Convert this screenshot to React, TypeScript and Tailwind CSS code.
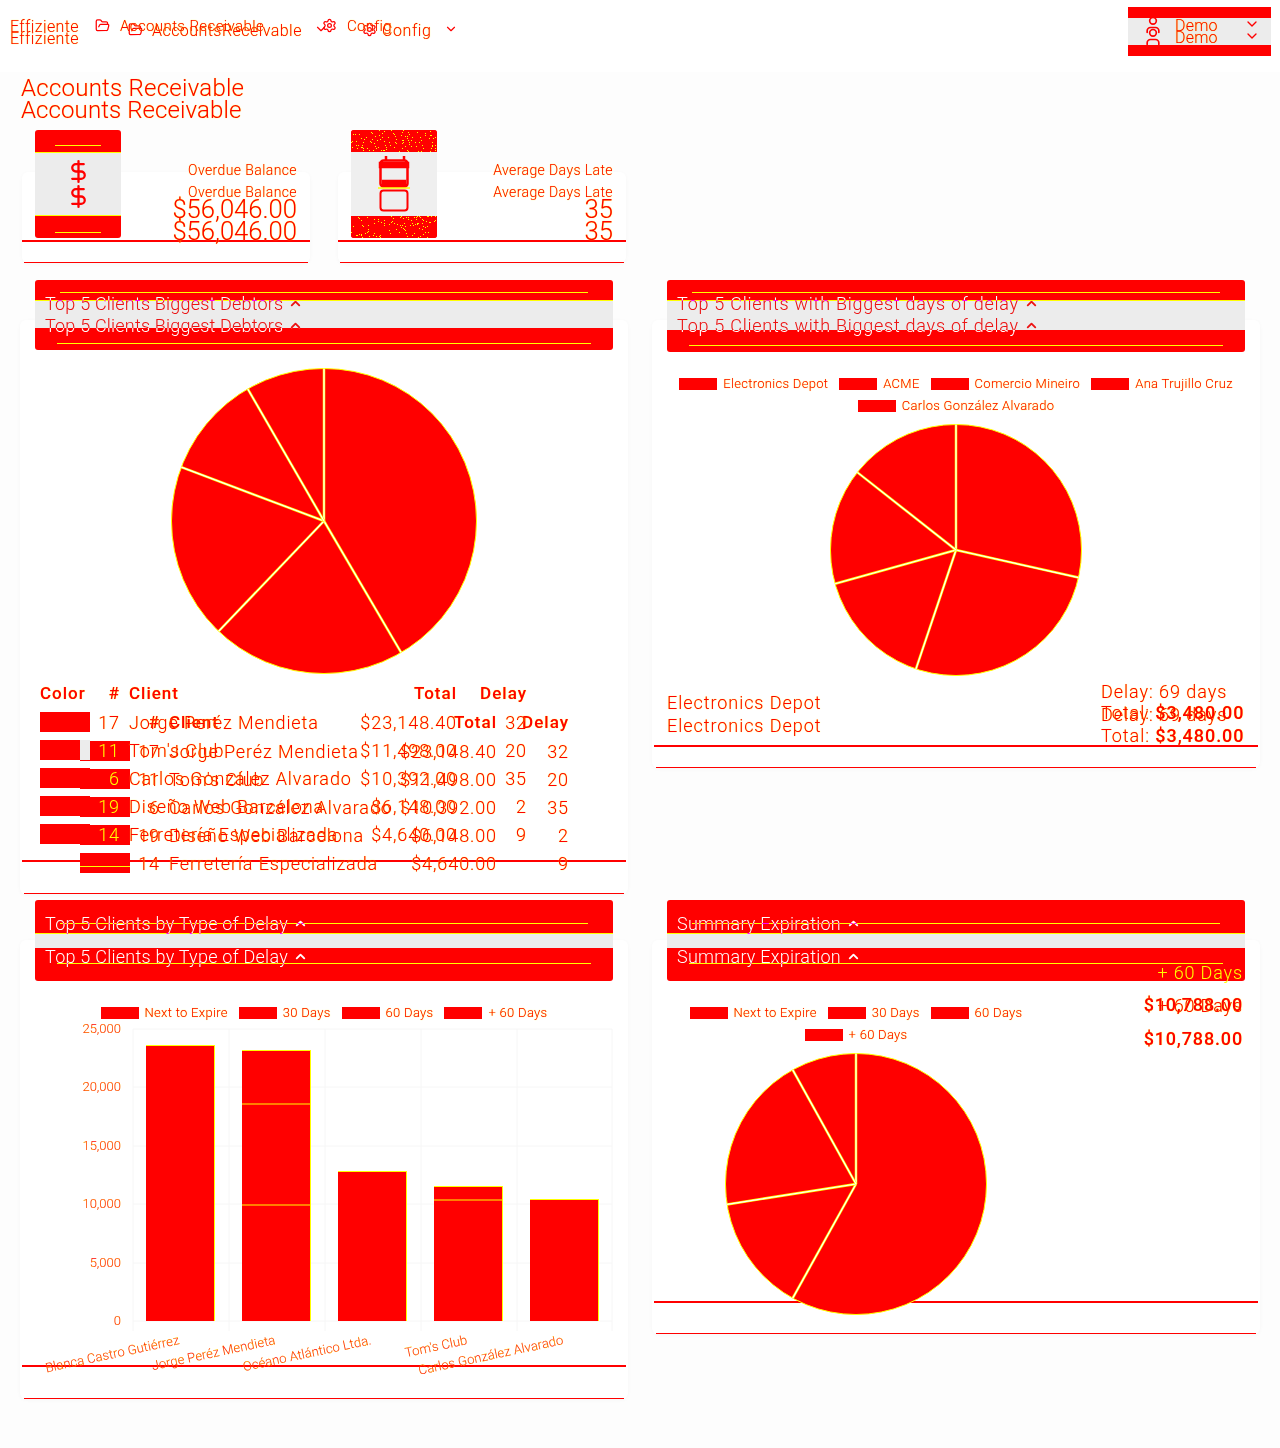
import { ChevronDown, ChevronUp, DollarSign, FolderOpen, Settings, User } from 'lucide-react';

const red = '#ff0000';
const redText = "text-[#ff0000] [text-shadow:0_0_1px_#ffff00]";

const rows = [
  { id: 17, client: 'Jorge Peréz Mendieta', total: '$23,148.40', delay: 32 },
  { id: 11, client: "Tom's Club", total: '$11,498.00', delay: 20 },
  { id: 6, client: 'Carlos González Alvarado', total: '$10,392.00', delay: 35 },
  { id: 19, client: 'Diseño Web Barcelona', total: '$6,148.00', delay: 2 },
  { id: 14, client: 'Ferretería Especializada', total: '$4,640.00', delay: 9 },
];

const bars = [
  { name: 'Blanca Castro Gutiérrez', x: 146, top: 1046, lines: [] as number[] },
  { name: 'Jorge Peréz Mendieta', x: 242, top: 1051, lines: [1104, 1205] },
  { name: 'Océano Atlántico Ltda.', x: 338, top: 1172, lines: [] as number[] },
  { name: "Tom's Club", x: 434, top: 1187, lines: [1200] },
  { name: 'Carlos González Alvarado', x: 530, top: 1200, lines: [] as number[] },
];

const point = (c: number, r: number, deg: number) => {
  const a = (deg * Math.PI) / 180;
  return [c + r * Math.sin(a), c - r * Math.cos(a)];
};

const Pie = ({ size, angles, className }: { size: number; angles: number[]; className: string }) => {
  const c = size / 2;
  const r = c - 0.5;
  return (
    <svg width={size} height={size} className={className}>
      <circle cx={c} cy={c} r={r} fill={red} stroke="#ffff00" strokeWidth="1" />
      {angles.map((deg) => {
        const [x, y] = point(c, r, deg);
        return (
          <g key={deg}>
            <line x1={c} y1={c} x2={x} y2={y} stroke="#ffff00" strokeWidth="2.5" />
            <line x1={c} y1={c} x2={x} y2={y} stroke="#ffffff" strokeWidth="1.2" />
          </g>
        );
      })}
    </svg>
  );
};

const Speckle = ({ seed }: { seed: number }) => {
  let n = seed;
  const dots = Array.from({ length: 110 }, () => {
    n = (n * 1103515245 + 12345) % 2147483648;
    const x = (n >> 8) % 86;
    n = (n * 1103515245 + 12345) % 2147483648;
    return { x, y: (n >> 8) % 22 };
  });
  return (
    <svg width="86" height="22" className="block">
      <rect width="86" height="22" fill={red} />
      {dots.map((d, i) => (
        <rect key={i} x={d.x} y={d.y} width="1" height="1" fill="#ffff00" />
      ))}
    </svg>
  );
};

const Legend = ({ items, className }: { items: string[]; className: string }) => (
  <div className={`flex flex-wrap justify-center gap-x-[11px] ${className}`}>
    {items.map((item) => (
      <div key={item} className="flex h-[22px] items-center gap-[6px]">
        <span className="h-[12px] w-[38px] bg-[#ff0000]" />
        <span className={`text-[13px] font-light tracking-[0.3px] ${redText}`}>{item}</span>
      </div>
    ))}
  </div>
);

const Header = ({ top, mid, bottom, upper, lower }: { top: string; mid: string; bottom: string; upper: string; lower: string }) => (
  <div className="flex w-[578px] flex-col overflow-hidden rounded-[3px] bg-[#ff0000]">
    <div className={top}>
      <div className={`mx-[25px] h-px bg-[#ffff00] ${upper}`} />
    </div>
    <div className={`border-t border-[#ffff00] bg-[#ececec] ${mid}`} />
    <div className={bottom}>
      <div className={`mx-[22px] h-px bg-[#ffff00] ${lower}`} />
    </div>
  </div>
);

const Panel = ({ card, line, children }: { card: string; line: string; children: React.ReactNode }) => (
  <div className="grid w-[632px] items-start">
    <div className={`col-start-1 row-start-1 ml-[20px] mt-[40px] flex w-[608px] flex-col rounded-md bg-white px-[2px] shadow-[0_1px_4px_rgba(0,0,0,0.03)] ${card}`}>
      <div className={`h-[2px] bg-[#ff0000] ${line}`} />
      <div className="mx-[2px] mt-auto h-px bg-[#ff0000]" />
    </div>
    <div className="col-start-1 row-start-1 ml-[35px]">{children}</div>
  </div>
);

const KpiBox = ({ kind }: { kind: 'money' | 'date' }) => (
  <div className="col-start-1 row-start-1 ml-[35px] flex h-[108px] w-[86px] flex-col overflow-hidden rounded-[3px] bg-[#ff0000]">
    {kind === 'money' ? (
      <div className="h-[22px]">
        <div className="mx-[20px] mt-[15px] h-px bg-[#ffff00]" />
      </div>
    ) : (
      <Speckle seed={7} />
    )}
    {kind === 'money' ? (
      <div className="flex h-[64px] flex-col items-center justify-center border-y border-[#ffff00] bg-[#ececec] text-[#ff0000]">
        <DollarSign size={25} strokeWidth={2.2} />
        <DollarSign size={25} strokeWidth={2.2} />
      </div>
    ) : (
      <div className="flex h-[64px] items-center justify-center bg-[#efefef]">
        <svg width="32" height="56" viewBox="0 0 32 56" fill="none" stroke={red} strokeWidth="2.5">
          <path d="M8 0v5M26 0v5" />
          <rect x="2.5" y="4.5" width="27" height="26" rx="3" />
          <path d="M2 7h28v4H2zM5 25h22v5H5z" fill={red} />
          <path d="M0 32h32" stroke="#ffff00" strokeWidth="1.5" />
          <rect x="2.5" y="34.5" width="27" height="20" rx="3" strokeWidth="2" />
        </svg>
      </div>
    )}
    {kind === 'money' ? (
      <div className="h-[22px]">
        <div className="mx-[20px] mt-[16px] h-px bg-[#ffff00]" />
      </div>
    ) : (
      <Speckle seed={91} />
    )}
  </div>
);

const KpiCard = ({ kind }: { kind: 'money' | 'date' }) => (
  <div className="grid h-[133px] w-[316px]">
    <div className="col-start-1 row-start-1 ml-[22px] mt-[42px] flex h-[91px] w-[288px] flex-col rounded-md bg-white shadow-[0_1px_4px_rgba(0,0,0,0.03)]">
      <div className="mt-[68px] h-[2px] bg-[#ff0000]" />
      <div className="mx-[2px] mt-auto h-px bg-[#ff0000]" />
    </div>
    <KpiBox kind={kind} />
  </div>
);

const Chart = () => (
  <svg width="578" height="380" viewBox="35 1020 578 380" className="-mt-[4px] block">
    {[1029, 1087, 1146, 1204, 1263, 1321].map((y, i) => (
      <g key={y}>
        <line x1="133" x2="612" y1={y} y2={y} stroke="#f6f6f6" />
        <text x="121" y={y + 4} textAnchor="end" fontSize="13" fontWeight="300" fill={red} stroke="#ffff00" strokeWidth="0.1">
          {['25,000', '20,000', '15,000', '10,000', '5,000', '0'][i]}
        </text>
      </g>
    ))}
    {[133, 229, 325, 421, 517, 612].map((x) => (
      <line key={x} x1={x} x2={x} y1="1029" y2="1331" stroke="#f6f6f6" />
    ))}
    {bars.map((bar) => (
      <g key={bar.name}>
        <rect x={bar.x} y={bar.top} width="68" height={1321 - bar.top} fill={red} />
        <line x1={bar.x + 68.5} x2={bar.x + 68.5} y1={bar.top} y2="1321" stroke="#ffff00" />
        <line x1={bar.x} x2={bar.x + 69} y1={bar.top - 0.5} y2={bar.top - 0.5} stroke="#ffff00" />
        {bar.lines.map((y) => (
          <line key={y} x1={bar.x} x2={bar.x + 69} y1={y} y2={y} stroke="#ffff00" />
        ))}
        <text
          x={bar.x + 34}
          y="1344"
          textAnchor="end"
          fontSize="13"
          fontWeight="300"
          letterSpacing="0.1"
          fill={red}
          stroke="#ffff00"
          strokeWidth="0.1"
          transform={`rotate(-12 ${bar.x + 34} 1344)`}
        >
          {bar.name}
        </text>
      </g>
    ))}
  </svg>
);

const Surface = () => (
  <div className="col-start-1 row-start-1 flex flex-col">
    <div className="flex h-[72px] justify-end bg-white pr-[9px] pt-[7px]">
      <div className="flex h-[49px] w-[143px] flex-col bg-[#ff0000]">
        <div className="mt-[11px] h-[27px] bg-[#ececec]" />
      </div>
    </div>
    <div className="mt-[58px] flex">
      <KpiCard kind="money" />
      <KpiCard kind="date" />
    </div>
    <div className="mt-[17px] flex h-[620px] items-start">
      <Panel card="h-[574px]" line="mt-[540px]">
        <Header top="h-[20px]" mid="h-[28px]" bottom="h-[22px]" upper="mt-[12px]" lower="mt-[15px]" />
        <Pie size={306} angles={[0, 149.6, 223.7, 290.7, 330]} className="ml-[136px] mt-[18px]" />
      </Panel>
      <Panel card="h-[448px]" line="mt-[425px]">
        <Header top="h-[20px]" mid="h-[30px]" bottom="h-[22px]" upper="mt-[12px]" lower="mt-[15px]" />
        <Legend
          items={['Electronics Depot', 'ACME', 'Comercio Mineiro', 'Ana Trujillo Cruz', 'Carlos González Alvarado']}
          className="mt-[21px] w-[578px]"
        />
        <Pie size={252} angles={[0, 102.7, 198.6, 254.4, 308.2]} className="ml-[163px] mt-[7px]" />
      </Panel>
    </div>
    <div className="flex items-start">
      <Panel card="h-[459px]" line="mt-[425px]">
        <Header top="h-[33px]" mid="h-[15px]" bottom="h-[33px]" upper="mt-[23px]" lower="mt-[15px]" />
        <Legend items={['Next to Expire', '30 Days', '60 Days', '+ 60 Days']} className="mt-[21px] w-[578px]" />
        <Chart />
      </Panel>
      <Panel card="h-[394px]" line="mt-[361px]">
        <Header top="h-[33px]" mid="h-[15px]" bottom="h-[33px]" upper="mt-[23px]" lower="mt-[15px]" />
        <Legend items={['Next to Expire', '30 Days', '60 Days', '+ 60 Days']} className="mt-[21px] w-[378px]" />
        <Pie size={262} angles={[0, 209, 261, 331]} className="ml-[58px] mt-[7px]" />
      </Panel>
    </div>
  </div>
);

const Heading = ({ text, className }: { text: string; className: string }) => (
  <div className={`ml-[45px] flex h-[24px] items-center gap-[5px] text-[18px] font-light text-[#00ffff] mix-blend-difference ${className}`}>
    {text}
    <ChevronUp size={15} strokeWidth={3} />
  </div>
);

const Table = ({ className, ghost }: { className: string; ghost: boolean }) => (
  <div className={`text-[18px] font-light tracking-[0.9px] ${className}`}>
    <div className={`flex h-[28px] items-center text-[17px] font-medium tracking-[1px] ${redText}`}>
      <span className="w-[50px]">{ghost ? '' : 'Color'}</span>
      <span className="w-[30px] text-right">#</span>
      <span className="w-[238px] pl-[9px]">Client</span>
      <span className="w-[99px] text-right">Total</span>
      <span className={`${ghost ? 'w-[72px]' : 'w-[70px]'} text-right`}>Delay</span>
    </div>
    {rows.map((row, i) => (
      <div key={row.id} className={`flex h-[28px] items-center ${redText}`}>
        <span className={`flex h-[20px] w-[50px] bg-[#ff0000] ${ghost ? '' : 'justify-end'}`}>
          {!ghost && i === 1 && <span className="h-[20px] w-[10px] bg-[#ececec]" />}
          {ghost && i === 4 && <span className="mt-[13px] h-px w-[50px] bg-[#ffff00]" />}
        </span>
        <span className={`w-[30px] text-right ${!ghost && i > 0 ? 'text-[#ffff00] [text-shadow:none]' : ''}`}>{row.id}</span>
        <span className="w-[238px] whitespace-nowrap pl-[9px]">{row.client}</span>
        <span className="w-[99px] whitespace-nowrap text-right">{row.total}</span>
        <span className={`${ghost ? 'w-[72px]' : 'w-[70px]'} text-right`}>{row.delay}</span>
      </div>
    ))}
  </div>
);

const Kpi = ({ label, value, className }: { label: string; value: string; className: string }) => (
  <div className={`flex w-[316px] flex-col items-end pr-[19px] font-light ${redText} ${className}`}>
    <div className="text-[14px] leading-[20px] tracking-[0.4px]">{label}</div>
    <div className="mt-[15px] text-[25.6px] leading-[28px]">{value}</div>
  </div>
);

const Account = ({ className }: { className: string }) => (
  <div className={`ml-auto mr-[20px] flex w-[115px] items-start ${className}`}>
    <User size={20} className="-ml-[2px] mr-[12px] -mt-[1px] shrink-0" />
    <span className="w-[70px] leading-[19px] tracking-[0.2px]">Demo</span>
    <ChevronDown size={16} className="shrink-0" />
  </div>
);

const Navigation = ({ ghost }: { ghost: boolean }) =>
  ghost ? (
    <div className={`flex h-[72px] items-start pt-[19px] text-[16px] font-light ${redText}`}>
      <span className="ml-[10px] mt-[8px] w-[118px] tracking-[0.4px]">Effiziente</span>
      <FolderOpen size={15} className="mr-[9px] mt-[3px] shrink-0" />
      <span className="w-[150px] tracking-[0.45px]">AccountsReceivable</span>
      <ChevronDown size={14} className="ml-[12px] mr-[34px] mt-[3px] shrink-0" />
      <Settings size={15} className="mr-[5px] mt-[3px] shrink-0" />
      <span className="w-[62px] tracking-[0.6px]">Config</span>
      <ChevronDown size={14} className="mt-[3px] shrink-0" />
      <Account className="mt-[9px]" />
    </div>
  ) : (
    <div className={`flex h-[72px] items-start pt-[15px] text-[16px] font-light ${redText}`}>
      <span className="ml-[10px] w-[85px] tracking-[0.4px]">Effiziente</span>
      <FolderOpen size={15} className="mr-[10px] mt-[3px] shrink-0" />
      <span className="w-[202px] text-[15px] tracking-[0.4px]">Accounts Receivable</span>
      <Settings size={15} className="mr-[10px] mt-[3px] shrink-0" />
      <span className="text-[15px] tracking-[0.3px]">Config</span>
      <Account className="mt-[1px]" />
    </div>
  );

const TextLayer = ({ ghost }: { ghost: boolean }) => (
  <div className="col-start-1 row-start-1 flex flex-col">
    <Navigation ghost={ghost} />
    <div className={`h-[58px] pl-[21px] text-[24px] font-light leading-[28px] ${redText} ${ghost ? 'pt-[24px] tracking-[0.1px]' : 'pt-[2px] tracking-[0.25px]'}`}>
      Accounts Receivable
    </div>
    <div className="flex h-[150px]">
      <Kpi label="Overdue Balance" value="$56,046.00" className={ghost ? 'pt-[52px]' : 'pt-[30px]'} />
      <Kpi label="Average Days Late" value="35" className={ghost ? 'pt-[52px]' : 'pt-[30px]'} />
    </div>
    <div className="flex h-[620px] items-start">
      <div className="w-[632px]">
        <Heading text="Top 5 Clients Biggest Debtors" className={`tracking-[0.2px] ${ghost ? 'mt-[33px]' : 'mt-[11px]'}`} />
        <Table ghost={ghost} className={ghost ? 'ml-[80px] mt-[372px]' : 'ml-[40px] mt-[365px]'} />
      </div>
      <div className="w-[632px]">
        <Heading text="Top 5 Clients with Biggest days of delay" className={`tracking-[0.75px] ${ghost ? 'mt-[33px]' : 'mt-[11px]'}`} />
        <div className={`ml-[35px] flex w-[578px] items-center justify-between font-light tracking-[0.95px] ${redText} text-[18px] leading-[21px] ${ghost ? 'mt-[367px]' : 'mt-[366px]'}`}>
          <span>Electronics Depot</span>
          <div className="w-[144px] whitespace-nowrap">
            <div>Delay: 69 days</div>
            <div>
              Total: <span className="font-medium">$3,480.00</span>
            </div>
          </div>
        </div>
      </div>
    </div>
    <div className="flex items-start">
      <div className="w-[632px]">
        <Heading text="Top 5 Clients by Type of Delay" className={`tracking-[0.25px] ${ghost ? 'mt-[44px]' : 'mt-[11px]'}`} />
      </div>
      <div className="w-[632px]">
        <Heading text="Summary Expiration" className={`tracking-[0.25px] ${ghost ? 'mt-[44px]' : 'mt-[11px]'}`} />
        <div className={`mt-[28px] flex w-[611px] flex-col items-end text-[18px] leading-[20px] tracking-[0.85px] ${redText}`}>
          <span className={`font-light ${ghost ? '' : 'text-[#ffff00] [text-shadow:none]'}`}>+ 60 Days</span>
          <span className={`font-medium ${ghost ? 'mt-[13px]' : 'mt-[12px]'}`}>$10,788.00</span>
        </div>
      </div>
    </div>
  </div>
);

export default function App() {
  return (
    <div className="grid h-[1448px] w-[1280px] overflow-hidden bg-[#fdfdfd] [font-family:Roboto,sans-serif]">
      <Surface />
      <TextLayer ghost />
      <TextLayer ghost={false} />
    </div>
  );
}
